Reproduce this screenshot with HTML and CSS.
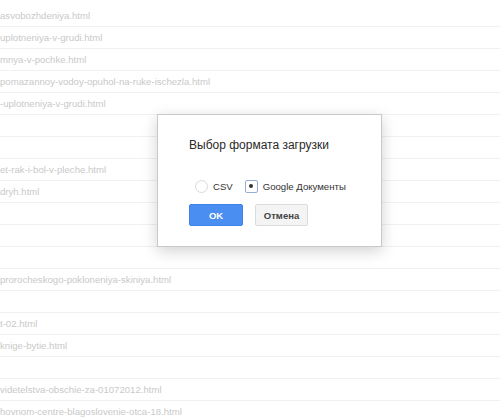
FILE: index.html
```html
<!DOCTYPE html>
<html lang="ru">
<head>
<meta charset="utf-8">
<title>Выбор формата загрузки</title>
<link rel="stylesheet" href="styles.css">
</head>
<body>
<ul class="files">
  <li class="row">asvobozhdeniya.html</li>
  <li class="row">uplotneniya-v-grudi.html</li>
  <li class="row">mnya-v-pochke.html</li>
  <li class="row">pomazannoy-vodoy-opuhol-na-ruke-ischezla.html</li>
  <li class="row">-uplotneniya-v-grudi.html</li>
  <li class="row"></li>
  <li class="row"></li>
  <li class="row">et-rak-i-bol-v-pleche.html</li>
  <li class="row">dryh.html</li>
  <li class="row"></li>
  <li class="row"></li>
  <li class="row"></li>
  <li class="row">prorocheskogo-pokloneniya-skiniya.html</li>
  <li class="row"></li>
  <li class="row">t-02.html</li>
  <li class="row">knige-bytie.html</li>
  <li class="row"></li>
  <li class="row">videtelstva-obschie-za-01072012.html</li>
  <li class="row">hovnom-centre-blagoslovenie-otca-18.html</li>
</ul>

<div class="dialog">
  <div class="title">Выбор формата загрузки</div>
  <div class="options">
    <label class="option">
      <span class="radio"></span>
      <span class="label">CSV</span>
    </label>
    <label class="option">
      <span class="radio checked"><span class="dot"></span></span>
      <span class="label">Google Документы</span>
    </label>
  </div>
  <div class="buttons">
    <button class="btn primary">OK</button>
    <button class="btn">Отмена</button>
  </div>
</div>
</body>
</html>
```

FILE: styles.css
```css
html, body {
  margin: 0;
  padding: 0;
  background: #fff;
  font-family: "Liberation Sans", Arial, sans-serif;
}

body {
  width: 500px;
  height: 417px;
  overflow: hidden;
  position: relative;
}

.files {
  list-style: none;
  margin: 0;
  padding: 5px 0 0 0;
}

.row {
  height: 21px;
  line-height: 21px;
  border-bottom: 1px solid #f1f1f1;
  font-size: 9.6px;
  color: #c9c9c9;
  white-space: nowrap;
}

.dialog {
  position: absolute;
  left: 157px;
  top: 114px;
  width: 225px;
  height: 133px;
  box-sizing: border-box;
  background: #fff;
  border: 1px solid #c9c9c9;
  box-shadow: 0 4px 14px rgba(0, 0, 0, 0.18);
  padding: 0 0 0 31px;
  display: flex;
  flex-direction: column;
}

.title {
  margin-top: 22px;
  font-size: 12px;
  line-height: 16px;
  color: #2a2a2a;
  white-space: nowrap;
}

.options {
  margin-top: 26px;
  margin-left: 6px;
  display: flex;
  align-items: center;
  height: 14px;
  gap: 12px;
}

.option {
  display: flex;
  align-items: center;
  gap: 5px;
  font-size: 9.6px;
  color: #333;
  white-space: nowrap;
}

.radio {
  width: 11px;
  height: 11px;
  border: 1px solid #dadada;
  border-radius: 50%;
  background: #fff;
  display: flex;
  align-items: center;
  justify-content: center;
}

.radio.checked {
  border-radius: 2px;
  border-color: #97acd6;
}

.dot {
  width: 4px;
  height: 4px;
  border-radius: 50%;
  background: #333;
}

.buttons {
  margin-top: 11px;
  display: flex;
  gap: 12px;
}

.btn {
  height: 22px;
  width: 53px;
  padding: 0;
  border: 1px solid #dcdcdc;
  border-radius: 2px;
  background: #f4f4f4;
  color: #444;
  font-family: "Liberation Sans", Arial, sans-serif;
  font-size: 9.5px;
  font-weight: bold;
}

.btn.primary {
  width: 54px;
  background: #4a8ef2;
  border-color: #3f83ea;
  color: #fff;
}
```
